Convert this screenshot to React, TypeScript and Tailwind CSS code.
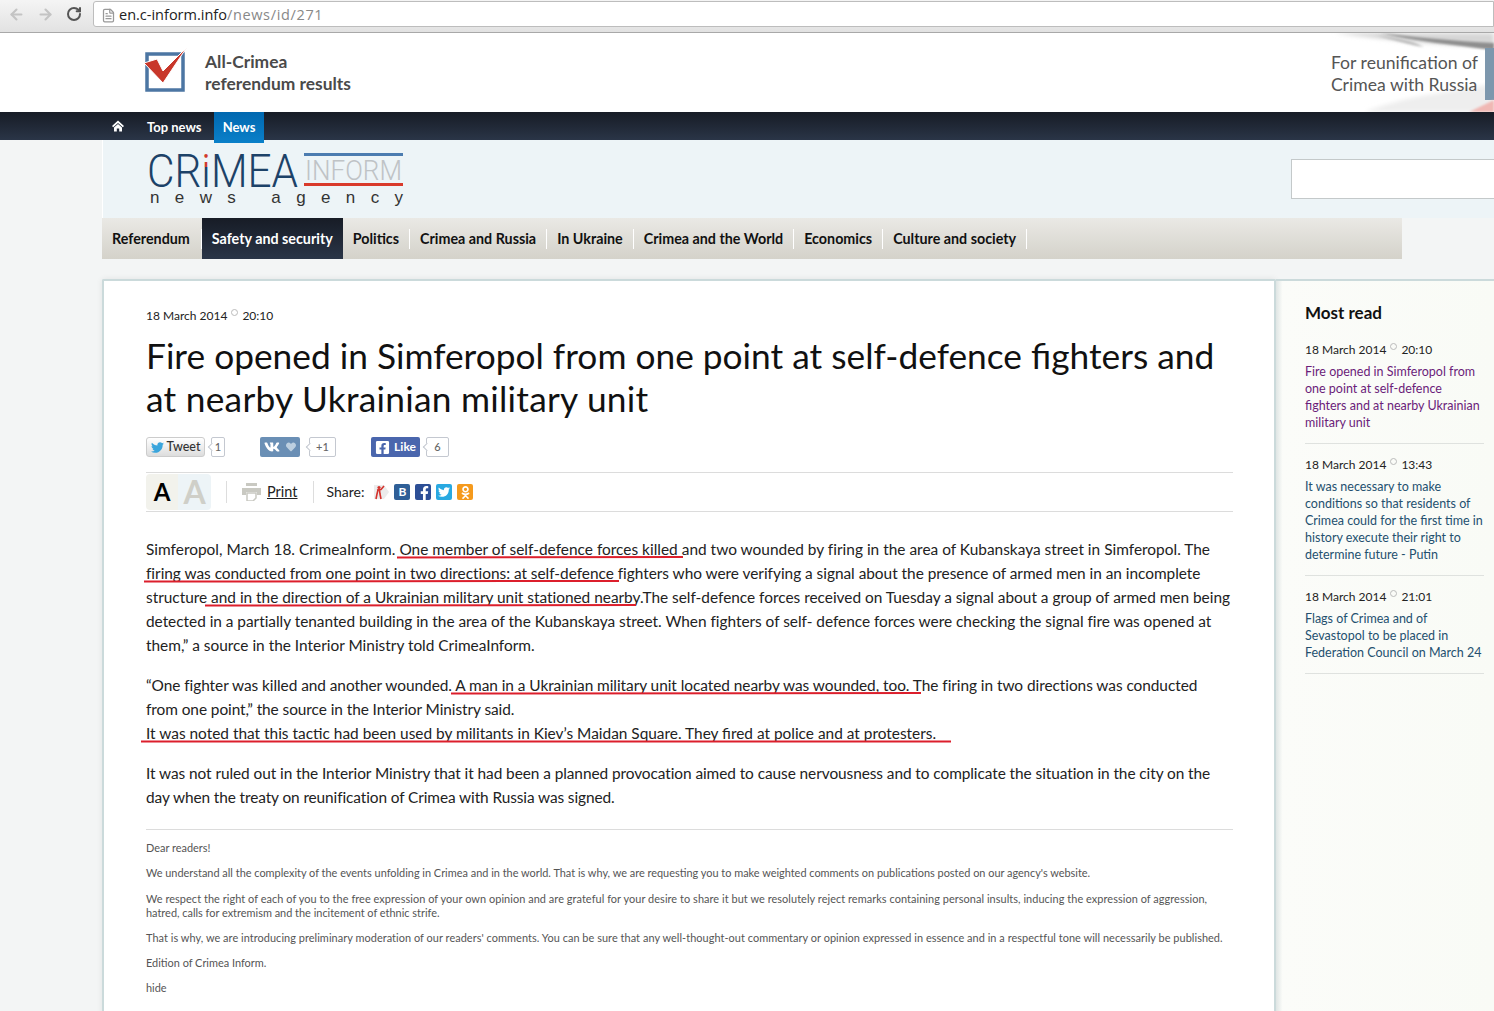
import { FileText, RotateCw, ArrowLeft, ArrowRight } from "lucide-react";
import { FaFacebookF, FaFacebookSquare, FaHeart, FaOdnoklassniki, FaTwitter, FaVk } from "react-icons/fa";

const font = "font-['Lato','Liberation_Sans',sans-serif]";

const menu = ["Referendum", "Safety and security", "Politics", "Crimea and Russia", "In Ukraine", "Crimea and the World", "Economics", "Culture and society"];

const mostRead = [
  { date: "18 March 2014", time: "20:10", visited: true, lines: ["Fire opened in Simferopol from", "one point at self-defence", "fighters and at nearby Ukrainian", "military unit"] },
  { date: "18 March 2014", time: "13:43", visited: false, lines: ["It was necessary to make", "conditions so that residents of", "Crimea could for the first time in", "history execute their right to", "determine future - Putin"] },
  { date: "18 March 2014", time: "21:01", visited: false, lines: ["Flags of Crimea and of", "Sevastopol to be placed in", "Federation Council on March 24"] },
];

function DateLine({ date, time }: { date: string; time: string }) {
  return (
    <p className="flex items-start text-[12px] leading-[17px] text-[#222]">
      {date}
      <span className="mx-[4px] mt-[2px] h-[7px] w-[7px] rounded-full border border-[#bbb]" />
      {time}
    </p>
  );
}

function Count({ children, className }: { children: string; className: string }) {
  return (
    <span className={`relative flex h-[20px] items-center justify-center rounded-[2px] border border-[#c4c8d0] bg-white text-[11px] font-medium text-[#666] ${className}`}>
      <span className="absolute left-[-3px] top-[6px] h-[6px] w-[6px] rotate-45 border-b border-l border-[#c4c8d0] bg-white" />
      <span className="relative">{children}</span>
    </span>
  );
}

function Logo() {
  return (
    <svg width="260" height="78" viewBox="0 -12 260 78">
      <defs>
        <linearGradient id="iDot" gradientUnits="userSpaceOnUse" x1="0" y1="0" x2="0" y2="36">
          <stop offset="0.42" stopColor="#d0392c" />
          <stop offset="0.42" stopColor="#1d4268" />
        </linearGradient>
      </defs>
      <text x="0" y="35" fontFamily="Roboto, sans-serif" fontWeight="300" fontSize="46" fill="#1d4268" textLength="151" lengthAdjust="spacingAndGlyphs">
        CR<tspan fill="url(#iDot)">i</tspan>MEA
      </text>
      <rect x="157" y="1" width="99" height="3" fill="#4c7cb0" />
      <rect x="157" y="31" width="99" height="3" fill="#d93a2b" />
      <text x="158" y="27.5" fontFamily="Roboto, sans-serif" fontWeight="300" fontSize="28" fill="#bfc3c6" textLength="97" lengthAdjust="spacingAndGlyphs">
        INFORM
      </text>
      <text x="3" y="51" fontFamily="'Liberation Sans', sans-serif" fontSize="17" fill="#333" textLength="253" lengthAdjust="spacing" xmlSpace="preserve">
        news agency
      </text>
    </svg>
  );
}

export default function App() {
  return (
    <div className={`relative h-[1011px] w-[1494px] overflow-hidden bg-[#f3f5f5] ${font}`}>
      {/* browser bar */}
      <div className="flex h-[33px] items-start border-y border-b-[#a8a8a8] border-t-[#f4f4f4] bg-gradient-to-b from-[#f4f4f4] to-[#e2e2e2] pl-[8px]">
        <ArrowLeft size={17} strokeWidth={3} className="mt-[5px] text-[#c4c4c4]" />
        <ArrowRight size={17} strokeWidth={3} className="ml-[12px] mt-[5px] text-[#c4c4c4]" />
        <RotateCw size={16} strokeWidth={3} className="ml-[12px] mt-[5px] text-[#555]" />
        <div className="ml-[11px] flex h-[26px] flex-1 items-center rounded-l-[3px] border border-[#bdbdbd] bg-white pl-[7px] pt-[2px] font-['Open_Sans',sans-serif] text-[14.5px]">
          <FileText size={15} className="text-[#999]" />
          <span className="ml-[3px] text-[#222]">en.c-inform.info</span>
          <span className="tracking-[0.65px] text-[#888]">/news/id/271</span>
        </div>
      </div>

      {/* top strip */}
      <div className="relative flex h-[79px] items-center justify-between bg-white pl-[144px] pr-[16px]">
        <div className="flex items-center">
          <svg width="44" height="46" viewBox="0 0 44 46" className="mb-[5px]">
            <rect x="3" y="7" width="36" height="36" fill="none" stroke="#4c76a3" strokeWidth="3.5" />
            <path d="M0 16 L13 12 L19 24 L43 0 L19 36 Z" fill="#c8372a" stroke="#fff" strokeWidth="1" />
          </svg>
          <p className="ml-[17px] text-[17.4px] font-bold leading-[22px] text-[#4a4a4a]">
            All-Crimea
            <br />
            referendum results
          </p>
        </div>
        <svg className="absolute right-0 top-0" width="170" height="79" viewBox="0 0 170 79">
          <defs>
            <filter id="silk"><feGaussianBlur stdDeviation="2" /></filter>
            <filter id="silkSoft"><feGaussianBlur stdDeviation="1" /></filter>
          </defs>
          <path d="M10 0 L170 0 L170 15 C120 12 70 8 10 0 Z" fill="#d6d6d6" filter="url(#silk)" />
          <path d="M55 0 C90 8 130 12 170 17 L170 10 C130 8 90 4 55 0 Z" fill="#8e8e8e" filter="url(#silkSoft)" />
          <path d="M50 2 C75 8 85 12 100 14 C90 8 75 5 50 2 Z" fill="#bdbdbd" filter="url(#silkSoft)" />
          <path d="M40 79 C90 60 130 60 170 50 L170 79 Z" fill="#eeeeee" filter="url(#silk)" />
          <path d="M161 15 H170 V67 H161 Z" fill="#7d97ad" />
          <path d="M145 79 L170 67 L170 79 Z" fill="#f0b8b4" filter="url(#silkSoft)" />
        </svg>
        <p className="relative pt-[3px] text-[17.6px] leading-[22px] text-[#555]">
          For reunification of
          <br />
          Crimea with Russia
        </p>
      </div>

      {/* top nav */}
      <div className="relative flex h-[28px] items-center bg-gradient-to-b from-[#171c26] to-[#2a3547] pl-[112px] text-white">
        <svg width="12" height="12" viewBox="0 0 12 12" fill="#fff">
          <path d="M6 .5 L12 6 L10.8 7.2 L6 2.9 L1.2 7.2 L0 6 Z" />
          <path d="M2 7.6 L6 4.1 L10 7.6 V11.5 H7.2 V8.5 H4.8 V11.5 H2 Z" />
        </svg>
        <span className="ml-[23px] pt-[3px] text-[13px] font-bold">Top news</span>
        <span className="absolute left-[214px] top-0 flex h-[31px] w-[50px] items-center justify-center bg-gradient-to-b from-[#0168b0] to-[#0b80c9] text-[13px] font-bold">
          News
        </span>
      </div>

      {/* logo band */}
      <div className="ml-[102px] flex h-[78px] items-start justify-between border-l border-white bg-[#edf4f7] pl-[44px]">
        <Logo />
        <div className="mt-[19px] h-[40px] w-[203px] border border-r-0 border-[#c4c9ca] bg-white" />
      </div>

      {/* section menu */}
      <nav className="ml-[102px] flex h-[41px] w-[1300px] items-center bg-gradient-to-b from-[#eae9e5] to-[#d4d2ca] text-[14.3px] font-bold text-[#111]">
        {menu.map((item, i) => (
          <a
            key={item}
            className={
              i === 1
                ? "flex h-[41px] items-center bg-gradient-to-b from-[#171c26] to-[#2a3547] px-[10px] text-white"
                : i === 0
                  ? "flex h-[20px] items-center border-r border-white pl-[10px] pr-[11px]"
                  : "flex h-[20px] items-center border-r border-white px-[10px]"
            }
          >
            {item}
          </a>
        ))}
      </nav>

      {/* content */}
      <div className="ml-[102px] mt-[20px] flex">
        <main className="h-[740px] w-[1174px] rounded-t-[2px] border-x-2 border-t-2 border-[#cbdadb] bg-white pl-[42px] pr-[41px] pt-[26px] text-[#222] shadow-[0_0_6px_rgba(0,0,0,0.08)]">
          <DateLine date="18 March 2014" time="20:10" />
          <h1 className="mt-[10px] whitespace-nowrap text-[35.3px] leading-[43px] text-[#111]">
            Fire opened in Simferopol from one point at self-defence fighters and
            <br />
            <span className="tracking-[0.25px]">at nearby Ukrainian military unit</span>
          </h1>

          <div className="mt-[16px] flex h-[22px] items-center">
            <span className="flex h-[20px] w-[59px] items-center justify-center gap-[3px] rounded-[3px] border border-[#ccc] bg-gradient-to-b from-white to-[#ddd] text-[12.5px] font-medium text-[#333]">
              <FaTwitter size={13} className="text-[#3aa5dc]" />
              Tweet
            </span>
            <Count className="ml-[6px] w-[14px]">1</Count>
            <span className="ml-[35px] flex h-[20px] w-[40px] items-center justify-center gap-[6px] rounded-[2px] bg-[#6a8fb5] text-white">
              <FaVk size={16} />
              <FaHeart size={10} className="text-[#bccfe0]" />
            </span>
            <Count className="ml-[9px] w-[27px]">+1</Count>
            <span className="ml-[35px] flex h-[20px] w-[49px] items-center justify-center gap-[4px] rounded-[2px] bg-[#4a66ad] text-[12px] font-bold text-white">
              <FaFacebookSquare size={15} />
              Like
            </span>
            <Count className="ml-[6px] w-[23px]">6</Count>
          </div>

          <div className="mt-[14px] flex h-[40px] items-center border-y border-[#dcdcdc]">
            <span className="flex h-[36px] w-[32px] items-center justify-center rounded-l-[4px] bg-[#f2f2ec] text-[24px] font-bold leading-none text-black">A</span>
            <span className="flex h-[36px] w-[33px] items-center justify-center rounded-r-[4px] bg-[#edf4f7] text-[32px] font-bold leading-none text-[#cfcfc8]">A</span>
            <span className="ml-[15px] h-[22px] border-l border-[#ddd]" />
            <svg width="19" height="18" viewBox="0 0 19 18" className="ml-[15px]" fill="#c9c9c2">
              <path d="M4 0 H15 V3 H4 Z" />
              <path d="M0 5 H19 V12 H15 V9 H4 V12 H0 Z" />
              <path d="M5 10 H14 V15 L11 18 H5 Z" fill="none" stroke="#c9c9c2" strokeWidth="1.5" />
            </svg>
            <a className="ml-[6px] text-[14.5px] text-[#222] underline">Print</a>
            <span className="ml-[15px] h-[22px] border-l border-[#ddd]" />
            <span className="ml-[13px] pb-[2px] text-[14px]">Share:</span>
            <svg width="16" height="16" viewBox="0 0 16 16" className="ml-[9px]">
              <path d="M1 1 H11 L16 8 L11 15 H1 Z" fill="#ececec" />
              <circle cx="6" cy="3.5" r="1.6" fill="#d4322c" />
              <path d="M4 6 L8 5.5 L11 2 M5 6 L4 10 L3 15 M6.5 6 L7 10 L8 15" fill="none" stroke="#d4322c" strokeWidth="1.6" />
            </svg>
            <span className="ml-[5px] flex h-[16px] w-[16px] items-center justify-center rounded-[2px] bg-[#2f5f97] text-[12px] font-bold text-white">B</span>
            <span className="ml-[5px] flex h-[16px] w-[16px] items-end justify-center rounded-[2px] bg-[#2d4f96] pl-[3px] text-white"><FaFacebookF size={14} /></span>
            <span className="ml-[5px] flex h-[16px] w-[16px] items-center justify-center rounded-[2px] bg-[#29a9e1] text-white"><FaTwitter size={12} /></span>
            <span className="ml-[5px] flex h-[16px] w-[16px] items-center justify-center rounded-[2px] bg-[#f59a1d] text-white"><FaOdnoklassniki size={13} /></span>
          </div>

          <div className="relative mt-[25px] whitespace-nowrap text-[15.42px] leading-[24px] text-[#222]">
            <p>
              <span className="tracking-[0.013px]">Simferopol, March 18. CrimeaInform. One member of self-defence forces killed and two wounded by firing in the area of Kubanskaya street in Simferopol. The</span>
              <br />
              <span className="tracking-[-0.025px]">firing was conducted from one point in two directions: at self-defence fighters who were verifying a signal about the presence of armed men in an incomplete</span>
              <br />
              <span className="tracking-[-0.012px]">structure and in the direction of a Ukrainian military unit stationed nearby.The self-defence forces received on Tuesday a signal about a group of armed men being</span>
              <br />
              <span className="tracking-[-0.025px]">detected in a partially tenanted building in the area of the Kubanskaya street. When fighters of self- defence forces were checking the signal fire was opened at</span>
              <br />
              them,” a source in the Interior Ministry told CrimeaInform.
            </p>
            <p className="mt-[16px]">
              <span className="tracking-[-0.052px]">“One fighter was killed and another wounded. A man in a Ukrainian military unit located nearby was wounded, too. The firing in two directions was conducted</span>
              <br />
              <span className="tracking-[-0.07px]">from one point,” the source in the Interior Ministry said.</span>
              <br />
              It was noted that this tactic had been used by militants in Kiev’s Maidan Square. They fired at police and at protesters.
            </p>
            <p className="mt-[16px]">
              <span className="tracking-[-0.07px]">It was not ruled out in the Interior Ministry that it had been a planned provocation aimed to cause nervousness and to complicate the situation in the city on the</span>
              <br />
              <span className="tracking-[-0.1px]">day when the treaty on reunification of Crimea with Russia was signed.</span>
            </p>
            <svg className="pointer-events-none absolute left-[-10px] top-0 overflow-visible" width="1110" height="210" fill="none" stroke="#dc1f2c" strokeWidth="2">
              <path d="M261 20.5 L547 20" />
              <path d="M8 44.5 L483 44" />
              <path d="M69 68.5 L500 68" />
              <path d="M315 156.5 L785 156" />
              <path d="M5 204.5 L815 204.5" />
            </svg>
          </div>

          <div className="mt-[20px] whitespace-nowrap border-t border-[#dcdcdc] pt-[11px] text-[10.93px] leading-[14px] text-[#555]">
            <p>Dear readers!</p>
            <p className="mt-[11px]">We understand all the complexity of the events unfolding in Crimea and in the world. That is why, we are requesting you to make weighted comments on publications posted on our agency's website.</p>
            <p className="mt-[12px]">
              <span className="tracking-[0.058px]">We respect the right of each of you to the free expression of your own opinion and are grateful for your desire to share it but we resolutely reject remarks containing personal insults, inducing the expression of aggression,</span>
              <br />
              hatred, calls for extremism and the incitement of ethnic strife.
            </p>
            <p className="mt-[11px] tracking-[0.05px]">That is why, we are introducing preliminary moderation of our readers' comments. You can be sure that any well-thought-out commentary or opinion expressed in essence and in a respectful tone will necessarily be published.</p>
            <p className="mt-[11px]">Edition of Crimea Inform.</p>
            <p className="mt-[11px]">hide</p>
          </div>
        </main>

        <aside className="h-[740px] flex-1 border-t-2 border-[#cbdadb] bg-gradient-to-r from-[#dfe5e4] via-[#fbfcf9] via-[3%] to-[#f9fbf6] pl-[29px] pr-[10px] pt-[20px]">
          <h2 className="text-[17px] font-bold leading-[24px] text-[#111]">Most read</h2>
          <div className="mt-[16px]">
            {mostRead.map((item) => (
              <div key={item.time} className="mb-[12px] border-b border-[#dfe2df] pb-[12px]">
                <DateLine date={item.date} time={item.time} />
                <p className={`mt-[5px] whitespace-nowrap text-[12.5px] leading-[17px] ${item.visited ? "text-[#6b1d7a]" : "text-[#24506f]"}`}>
                  {item.lines.map((line) => (
                    <span key={line} className="block">{line}</span>
                  ))}
                </p>
              </div>
            ))}
          </div>
        </aside>
      </div>
    </div>
  );
}
